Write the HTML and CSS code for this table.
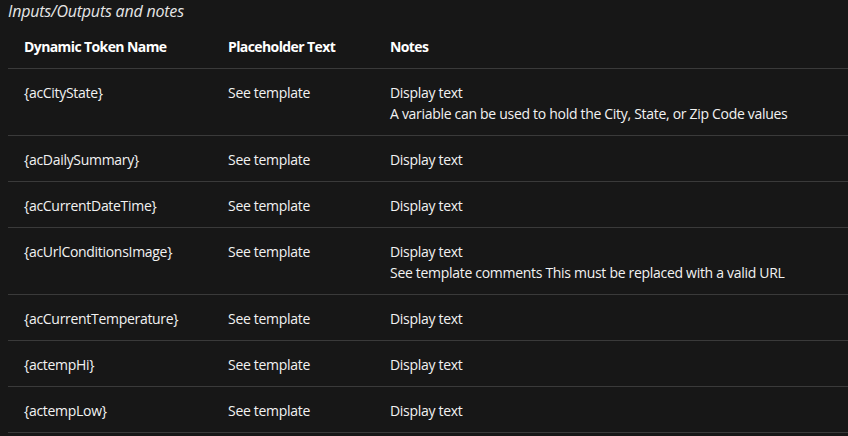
FILE: index.html
```html
<!DOCTYPE html>
<html lang="en">
<head>
<meta charset="utf-8">
<title>Inputs/Outputs and notes</title>
<link rel="stylesheet" href="styles.css">
</head>
<body>
<h3 class="caption">Inputs/Outputs and notes</h3>
<table class="tokens">
  <thead>
    <tr>
      <th class="c1">Dynamic Token Name</th>
      <th class="c2">Placeholder Text</th>
      <th class="c3">Notes</th>
    </tr>
  </thead>
  <tbody>
    <tr>
      <td>{acCityState}</td>
      <td>See template</td>
      <td>Display text<br>A variable can be used to hold the City, State, or Zip Code values</td>
    </tr>
    <tr>
      <td>{acDailySummary}</td>
      <td>See template</td>
      <td>Display text</td>
    </tr>
    <tr>
      <td>{acCurrentDateTime}</td>
      <td>See template</td>
      <td>Display text</td>
    </tr>
    <tr>
      <td>{acUrlConditionsImage}</td>
      <td>See template</td>
      <td>Display text<br>See template comments This must be replaced with a valid URL</td>
    </tr>
    <tr>
      <td>{acCurrentTemperature}</td>
      <td>See template</td>
      <td>Display text</td>
    </tr>
    <tr>
      <td>{actempHi}</td>
      <td>See template</td>
      <td>Display text</td>
    </tr>
    <tr>
      <td>{actempLow}</td>
      <td>See template</td>
      <td>Display text</td>
    </tr>
  </tbody>
</table>
</body>
</html>
```
FILE: styles.css
```css
html, body {
  margin: 0;
  padding: 0;
  background: #171717;
  color: #f2f2f2;
  font-family: "Open Sans", "Noto Sans", sans-serif;
  overflow: hidden;
}

.caption {
  margin: 0;
  padding: 1px 0 0 8px;
  font-size: 16px;
  line-height: 21px;
  font-style: italic;
  font-weight: 400;
  letter-spacing: -0.2px;
  color: #e6e6e6;
}

.tokens {
  margin: 1px 0 0 8px;
  width: 840px;
  border-collapse: collapse;
  table-layout: fixed;
  font-size: 14px;
  line-height: 21px;
  letter-spacing: -0.3px;
}

.tokens th,
.tokens td {
  padding: 13px 16px 11px;
  text-align: left;
  vertical-align: top;
  border-bottom: 1px solid #3a3a3a;
}

.tokens th {
  font-weight: 700;
  letter-spacing: -0.6px;
  color: #ffffff;
}

.c1 { width: 172px; }
.c2 { width: 130px; }
```
